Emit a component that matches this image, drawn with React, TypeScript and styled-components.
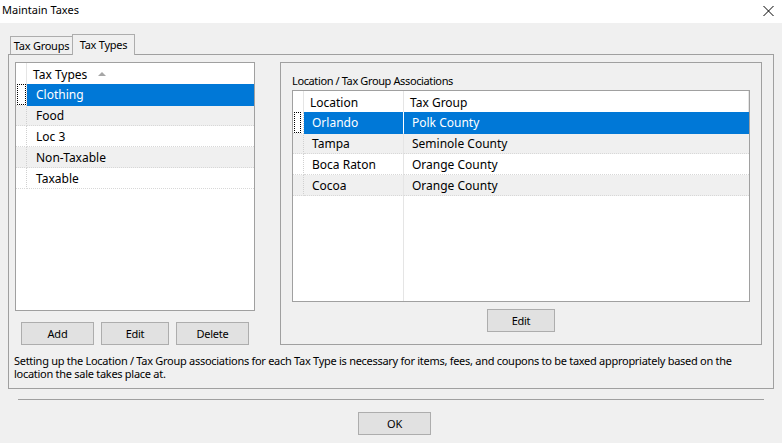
import React from "react";
import styled, { createGlobalStyle } from "styled-components";

const GlobalStyle = createGlobalStyle`
    * { box-sizing: border-box; }
    html, body {
        margin: 0;
        background: #f0f0f0;
    }
    body {
        font-family: "Noto Sans", "Liberation Sans", sans-serif;
        font-size: 11px;
        color: #000;
    }
`

const Window = styled.div`
    width: 782px;
    height: 443px;
    display: flex;
    flex-direction: column;
    overflow: hidden;
    background: #f0f0f0;
`

const TitleBar = styled.div`
    height: 23px;
    background: #fff;
    display: flex;
    align-items: flex-start;
    justify-content: space-between;
    padding: 2px 8px 0 2px;
`

const Title = styled.span`
    line-height: 16px;
`

const Close = styled.svg`
    margin-top: 4px;
`

const Body = styled.div`
    padding: 11px 8px 0;
    display: flex;
    flex-direction: column;
`

const TabStrip = styled.div`
    display: flex;
    align-items: flex-end;
    height: 20px;
    padding-left: 2px;
    position: relative;
    z-index: 1;
`

const Tab = styled.div<{ $active?: boolean }>`
    width: 63px;
    height: ${p => (p.$active ? 21 : 18)}px;
    margin-bottom: ${p => (p.$active ? -1 : 0)}px;
    margin-left: ${p => (p.$active ? -1 : 0)}px;
    padding-top: ${p => (p.$active ? 2 : 1)}px;
    border: 1px solid #adadad;
    border-bottom: none;
    background: #f0f0f0;
    text-align: center;
    line-height: 16px;
    letter-spacing: -0.25px;
    position: relative;
`

const TabPanel = styled.div`
    height: 335px;
    border: 1px solid #a0a0a0;
    padding: 7px 11px 0 6px;
    display: flex;
    flex-direction: column;
`

const TopRow = styled.div`
    display: flex;
    gap: 25px;
    align-items: flex-start;
`

const LeftColumn = styled.div`
    width: 240px;
    display: flex;
    flex-direction: column;
`

const ListBox = styled.div<{ $w: number; $h: number; $divider?: number }>`
    width: ${p => p.$w}px;
    height: ${p => p.$h}px;
    border: 1px solid #a0a0a0;
    background-color: #fff;
    background-image: ${p =>
        p.$divider
            ? `linear-gradient(to right, transparent ${p.$divider}px, #e5e5e5 ${p.$divider}px, #e5e5e5 ${p.$divider + 1}px, transparent ${p.$divider + 1}px)`
            : "none"};
    overflow: hidden;
    font-size: 12px;
`

const HeaderRow = styled.div<{ $cols: string }>`
    display: grid;
    grid-template-columns: ${p => p.$cols};
    height: 21px;
    background: #fff;
`

const HeaderCell = styled.div<{ $line?: boolean }>`
    display: flex;
    align-items: center;
    gap: 11px;
    padding: 2px 0 0 6px;
    line-height: 19px;
    white-space: nowrap;
    border-right: ${p => (p.$line ? "1px solid #e5e5e5" : "none")};
`

const SortArrow = styled.span`
    width: 0;
    height: 0;
    border-left: 4px solid transparent;
    border-right: 4px solid transparent;
    border-bottom: 4px solid #a6a6a6;
    margin-top: -2px;
`

const Row = styled.div<{ $cols: string; $alt?: boolean }>`
    display: grid;
    grid-template-columns: ${p => p.$cols};
    height: 21px;
    background: ${p => (p.$alt ? "#f0f0f0" : "transparent")};
`

const RowHead = styled.div<{ $sel?: boolean }>`
    border-right: 1px dotted #d0d0d0;
    border-bottom: 1px dotted #d8d8d8;
    background: ${p => (p.$sel ? "#fff" : "transparent")};
    padding: 0 0 0 1px;
`

const FocusBox = styled.div<{ $w: number }>`
    width: ${p => p.$w}px;
    height: 21px;
    border: 1px dotted #000;
`

const Cell = styled.div<{ $sel?: boolean; $pad: number; $line?: boolean }>`
    padding-left: ${p => p.$pad}px;
    line-height: 22px;
    white-space: nowrap;
    overflow: hidden;
    background: ${p => (p.$sel ? "#0078d7" : "transparent")};
    color: ${p => (p.$sel ? "#fff" : "#000")};
    border-bottom: 1px ${p => (p.$sel ? "solid #0078d7" : "dotted #d8d8d8")};
    border-right: ${p => (p.$line ? `1px solid ${p.$sel ? "#fff" : "#e5e5e5"}` : "none")};
`

const ButtonRow = styled.div`
    display: flex;
    gap: 7px;
    margin-top: 11px;
    padding-left: 6px;
`

const Button = styled.button<{ $w: number }>`
    width: ${p => p.$w}px;
    height: 23px;
    padding: 0;
    border: 1px solid #adadad;
    background: #e1e1e1;
    font: inherit;
    letter-spacing: -0.25px;
    color: #000;
`

const GroupBox = styled.div`
    width: 482px;
    height: 283px;
    border: 1px solid #a0a0a0;
    padding: 10px 0 0 11px;
    display: flex;
    flex-direction: column;
`

const GroupLabel = styled.div`
    line-height: 16px;
    margin-bottom: 1px;
    letter-spacing: -0.38px;
`

const CenteredButton = styled.div`
    width: 458px;
    display: flex;
    justify-content: center;
    margin-top: 7px;
`

const Note = styled.p`
    margin: 9px 0 0 -1px;
    line-height: 13px;
    letter-spacing: -0.28px;
    white-space: nowrap;
`

const Separator = styled.div`
    margin: 10px 10px 0;
    border-top: 1px solid #a0a0a0;
`

const Footer = styled.div`
    margin-top: 12px;
    padding-left: 350px;
`

const taxTypes = ["Clothing", "Food", "Loc 3", "Non-Taxable", "Taxable"]

const associations = [
    { location: "Orlando", group: "Polk County" },
    { location: "Tampa", group: "Seminole County" },
    { location: "Boca Raton", group: "Orange County" },
    { location: "Cocoa", group: "Orange County" },
]

const leftCols = "11px 1fr"
const rightCols = "11px 100px 1fr"

export default function App() {
    const selectedType = 0
    const selectedAssoc = 0

    return (
        <Window>
            <GlobalStyle />
            <TitleBar>
                <Title>Maintain Taxes</Title>
                <Close width="11" height="10" viewBox="0 0 11 10">
                    <path d="M0.5 0 L10.5 10 M10.5 0 L0.5 10" stroke="#000" strokeWidth="1" />
                </Close>
            </TitleBar>
            <Body>
                <TabStrip>
                    <Tab>Tax Groups</Tab>
                    <Tab $active>Tax Types</Tab>
                </TabStrip>
                <TabPanel>
                    <TopRow>
                        <LeftColumn>
                            <ListBox $w={240} $h={249}>
                                <HeaderRow $cols={leftCols}>
                                    <HeaderCell $line />
                                    <HeaderCell>
                                        Tax Types <SortArrow />
                                    </HeaderCell>
                                </HeaderRow>
                                {taxTypes.map((t, i) => (
                                    <Row key={t} $cols={leftCols} $alt={i % 2 === 1}>
                                        <RowHead $sel={i === selectedType}>
                                            {i === selectedType && <FocusBox $w={9} />}
                                        </RowHead>
                                        <Cell $pad={9} $sel={i === selectedType}>{t}</Cell>
                                    </Row>
                                ))}
                            </ListBox>
                            <ButtonRow>
                                <Button $w={73}>Add</Button>
                                <Button $w={68}>Edit</Button>
                                <Button $w={73}>Delete</Button>
                            </ButtonRow>
                        </LeftColumn>
                        <GroupBox>
                            <GroupLabel>Location / Tax Group Associations</GroupLabel>
                            <ListBox $w={458} $h={212} $divider={110}>
                                <HeaderRow $cols={rightCols}>
                                    <HeaderCell $line />
                                    <HeaderCell $line>Location</HeaderCell>
                                    <HeaderCell $line>Tax Group</HeaderCell>
                                </HeaderRow>
                                {associations.map((a, i) => (
                                    <Row key={a.location} $cols={rightCols} $alt={i % 2 === 1}>
                                        <RowHead $sel={i === selectedAssoc}>
                                            {i === selectedAssoc && <FocusBox $w={7} />}
                                        </RowHead>
                                        <Cell $pad={8} $line $sel={i === selectedAssoc}>{a.location}</Cell>
                                        <Cell $pad={8} $sel={i === selectedAssoc}>{a.group}</Cell>
                                    </Row>
                                ))}
                            </ListBox>
                            <CenteredButton>
                                <Button $w={68}>Edit</Button>
                            </CenteredButton>
                        </GroupBox>
                    </TopRow>
                    <Note>
                        Setting up the Location / Tax Group associations for each Tax Type is necessary for items, fees, and coupons to be taxed appropriately based on the
                        <br />
                        location the sale takes place at.
                    </Note>
                </TabPanel>
                <Separator />
                <Footer>
                    <Button $w={73}>OK</Button>
                </Footer>
            </Body>
        </Window>
    )
}
